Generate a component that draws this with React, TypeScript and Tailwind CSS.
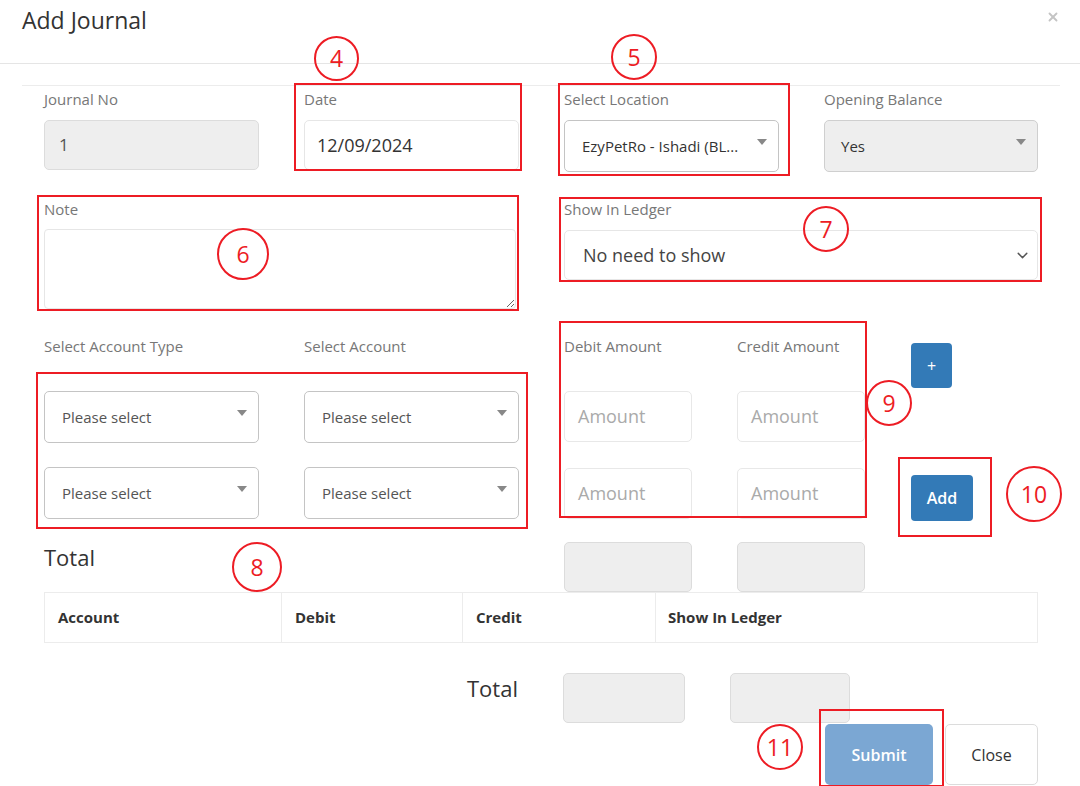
import { ChevronDown, X } from 'lucide-react';

function Caret() {
  return (
    <svg width="10" height="6" viewBox="0 0 10 6" className="mb-[8px] shrink-0">
      <polygon points="0,0 10,0 5,6" fill="#888" />
    </svg>
  );
}

export default function App() {
  return (
    <div className="relative w-[1080px] h-[786px] overflow-hidden bg-white font-['Open_Sans',sans-serif] text-[#333]">
      {/* Header */}
      <div className="flex h-[64px] items-start justify-between border-b border-[#e5e5e5] pl-[22px] pr-[20px]">
        <h1 className="mt-[4px] text-[23px] leading-[32px] text-[#333]">Add Journal</h1>
        <X size={14} strokeWidth={3.2} className="mt-[10px] text-[#c4c4c4]" />
      </div>

      <div className="px-[22px]">
        <div className="mt-[21px] w-[1038px] border-t border-[#ececec]" />

        <div className="pl-[22px]">
          {/* Row 1 */}
          <div className="mt-[3px] grid grid-cols-[215px_215px_215px_214px] gap-x-[45px]">
            <div>
              <label className="block text-[15px] leading-[20px] text-[#777]">Journal No</label>
              <div className="mt-[11px] flex h-[50px] items-center rounded-[5px] border border-[#dcdcdc] bg-[#eee] pl-[14px] text-[17px] text-[#555]">1</div>
            </div>
            <div>
              <label className="block text-[15px] leading-[20px] text-[#777]">Date</label>
              <div className="mt-[11px] flex h-[50px] items-center rounded-[5px] border border-[#e6e6e6] pl-[12px] text-[18px] text-[#333]">12/09/2024</div>
            </div>
            <div>
              <label className="block text-[15px] leading-[20px] text-[#777]">Select Location</label>
              <div className="mt-[11px] flex h-[52px] items-center justify-between rounded-[5px] border border-[#c4c4c4] pl-[17px] pr-[11px] text-[15px] text-[#333]">
                <span>EzyPetRo - Ishadi (BL...</span>
                <Caret />
              </div>
            </div>
            <div>
              <label className="block text-[15px] leading-[20px] text-[#777]">Opening Balance</label>
              <div className="mt-[11px] flex h-[52px] items-center justify-between rounded-[5px] border border-[#cfcfcf] bg-[#eee] pl-[16px] pr-[11px] text-[15px] text-[#333]">
                <span>Yes</span>
                <Caret />
              </div>
            </div>
          </div>

          {/* Row 2 */}
          <div className="mt-[27px] grid grid-cols-[475px_474px] gap-x-[45px]">
            <div>
              <label className="block text-[15px] leading-[20px] text-[#777]">Note</label>
              <textarea className="mt-[10px] block h-[80px] w-[472px] rounded-[4px] border border-[#e6e6e6] outline-none" />
            </div>
            <div>
              <label className="block text-[15px] leading-[20px] text-[#777]">Show In Ledger</label>
              <div className="mt-[11px] flex h-[50px] items-center justify-between rounded-[5px] border border-[#e6e6e6] pl-[18px] pr-[6px] text-[18px] text-[#444]">
                <span>No need to show</span>
                <ChevronDown size={17} strokeWidth={2} className="text-[#555]" />
              </div>
            </div>
          </div>

          {/* Row 3 */}
          <div className="mt-[27px] flex">
            <div className="grid grid-cols-[215px_215px] gap-x-[45px]">
              <label className="block text-[15px] leading-[20px] text-[#777]">Select Account Type</label>
              <label className="block text-[15px] leading-[20px] text-[#777]">Select Account</label>
              {[0, 1, 2, 3].map((i) => (
                <div
                  key={i}
                  className={`${i < 2 ? 'mt-[33px]' : 'mt-[22px]'} flex h-[52px] items-center justify-between rounded-[5px] border border-[#c4c4c4] pl-[17px] pr-[11px] text-[15px] text-[#555]`}
                >
                  <span>Please select</span>
                  <Caret />
                </div>
              ))}
            </div>

            <div className="ml-[45px] grid grid-cols-[128px_128px] gap-x-[45px]">
              <label className="block text-[15px] leading-[20px] text-[#777]">Debit Amount</label>
              <label className="block text-[15px] leading-[20px] text-[#777]">Credit Amount</label>
              {[0, 1, 2, 3].map((i) => (
                <div
                  key={i}
                  className={`${i < 2 ? 'mt-[33px]' : 'mt-[23px]'} flex h-[51px] items-center rounded-[5px] border border-[#e8e8e8] pl-[13px] text-[18px] text-[#aaa]`}
                >
                  Amount
                </div>
              ))}
            </div>

            <div className="ml-[46px] flex flex-col items-start">
              <button className="mt-[7px] flex h-[45px] w-[41px] items-center justify-center rounded-[4px] bg-[#337ab7] text-[16px] text-white">+</button>
              <button className="mt-[87px] flex h-[46px] w-[62px] items-center justify-center rounded-[4px] bg-[#337ab7] text-[16px] font-semibold text-white">Add</button>
            </div>
          </div>

          {/* Total row */}
          <div className="mt-[21px] flex items-start">
            <div className="w-[520px] text-[22px] leading-[30px] text-[#333]">Total</div>
            <div className="h-[50px] w-[128px] rounded-[5px] border border-[#dcdcdc] bg-[#eee]" />
            <div className="ml-[45px] h-[50px] w-[128px] rounded-[5px] border border-[#dcdcdc] bg-[#eee]" />
          </div>

          {/* Table */}
          <table className="w-[994px] border-collapse">
            <thead>
              <tr className="h-[50px] text-left text-[15px] font-bold text-[#333]">
                <th className="w-[237px] border border-[#ececec] pl-[13px] font-bold">Account</th>
                <th className="w-[181px] border border-[#ececec] pl-[13px] font-bold">Debit</th>
                <th className="w-[193px] border border-[#ececec] pl-[13px] font-bold">Credit</th>
                <th className="border border-[#ececec] pl-[12px] font-bold">Show In Ledger</th>
              </tr>
            </thead>
          </table>

          {/* Bottom totals */}
          <div className="mt-[30px] flex items-start pl-[423px]">
            <div className="w-[96px] text-[22px] leading-[30px] text-[#333]">Total</div>
            <div className="h-[50px] w-[122px] rounded-[5px] border border-[#dcdcdc] bg-[#eee]" />
            <div className="ml-[45px] h-[50px] w-[120px] rounded-[5px] border border-[#dcdcdc] bg-[#eee]" />
          </div>

          {/* Footer buttons */}
          <div className="mt-[1px] flex w-[994px] justify-end gap-[12px]">
            <button className="h-[61px] w-[108px] rounded-[5px] bg-[#7ba7d3] text-[16px] font-semibold text-white">Submit</button>
            <button className="h-[61px] w-[93px] rounded-[5px] border border-[#dcdcdc] bg-white text-[16px] text-[#333]">Close</button>
          </div>
        </div>
      </div>

      {/* Annotation boxes */}
      <div className="absolute left-[294px] top-[83px] h-[88px] w-[228px] border-2 border-[#ed1c24]" />
      <div className="absolute left-[558px] top-[83px] h-[93px] w-[232px] border-2 border-[#ed1c24]" />
      <div className="absolute left-[37px] top-[195px] h-[116px] w-[482px] border-2 border-[#ed1c24]" />
      <div className="absolute left-[559px] top-[197px] h-[85px] w-[483px] border-2 border-[#ed1c24]" />
      <div className="absolute left-[36px] top-[372px] h-[157px] w-[492px] border-2 border-[#ed1c24]" />
      <div className="absolute left-[559px] top-[321px] h-[197px] w-[308px] border-2 border-[#ed1c24]" />
      <div className="absolute left-[898px] top-[457px] h-[80px] w-[94px] border-2 border-[#ed1c24]" />
      <div className="absolute left-[819px] top-[709px] h-[78px] w-[125px] border-2 border-[#ed1c24]" />

      {/* Annotation circles */}
      <div className="absolute left-[314px] top-[36px] flex h-[45px] w-[45px] items-center justify-center rounded-full border-2 border-[#ed1c24] text-[23px] leading-none text-[#ed1c24]">4</div>
      <div className="absolute left-[611px] top-[34px] flex h-[46px] w-[46px] items-center justify-center rounded-full border-2 border-[#ed1c24] text-[23px] leading-none text-[#ed1c24]">5</div>
      <div className="absolute left-[217px] top-[228px] flex h-[52px] w-[52px] items-center justify-center rounded-full border-2 border-[#ed1c24] text-[23px] leading-none text-[#ed1c24]">6</div>
      <div className="absolute left-[803px] top-[206px] flex h-[46px] w-[46px] items-center justify-center rounded-full border-2 border-[#ed1c24] text-[23px] leading-none text-[#ed1c24]">7</div>
      <div className="absolute left-[232px] top-[542px] flex h-[50px] w-[50px] items-center justify-center rounded-full border-2 border-[#ed1c24] text-[23px] leading-none text-[#ed1c24]">8</div>
      <div className="absolute left-[866px] top-[380px] flex h-[46px] w-[46px] items-center justify-center rounded-full border-2 border-[#ed1c24] text-[23px] leading-none text-[#ed1c24]">9</div>
      <div className="absolute left-[1006px] top-[466px] flex h-[56px] w-[56px] items-center justify-center rounded-full border-2 border-[#ed1c24] text-[23px] leading-none text-[#ed1c24]">10</div>
      <div className="absolute left-[757px] top-[724px] flex h-[46px] w-[46px] items-center justify-center rounded-full border-2 border-[#ed1c24] text-[23px] leading-none text-[#ed1c24]">11</div>
    </div>
  );
}
